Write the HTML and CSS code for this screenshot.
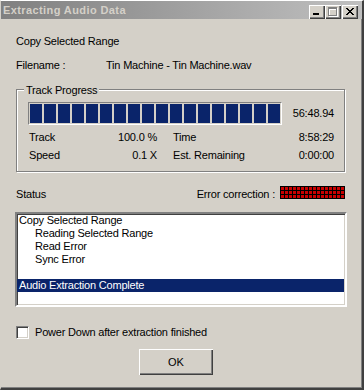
FILE: index.html
```html
<!DOCTYPE html>
<html lang="en">
<head>
    <meta charset="UTF-8">
    <meta name="viewport" content="width=device-width, initial-scale=1.0">
    <title>Extracting Audio Data</title>
    <link rel="stylesheet" href="styles.css">
</head>
<body>
    <div class="window">
        <div class="titlebar">
            <span class="titlebar-text">Extracting Audio Data</span>
            <div class="caption-buttons">
                <span class="cap-btn">
                    <svg width="16" height="14" viewBox="0 0 16 14" shape-rendering="crispEdges">
                        <rect x="4" y="8" width="6" height="2" fill="#000"/>
                    </svg>
                </span>
                <span class="cap-btn">
                    <svg width="16" height="14" viewBox="0 0 16 14" shape-rendering="crispEdges">
                        <g fill="#fff" transform="translate(1 1)">
                            <rect x="3" y="2" width="9" height="2"/>
                            <rect x="3" y="4" width="1" height="6"/>
                            <rect x="11" y="4" width="1" height="6"/>
                            <rect x="3" y="10" width="9" height="1"/>
                        </g>
                        <g fill="#808080">
                            <rect x="3" y="2" width="9" height="2"/>
                            <rect x="3" y="4" width="1" height="6"/>
                            <rect x="11" y="4" width="1" height="6"/>
                            <rect x="3" y="10" width="9" height="1"/>
                        </g>
                    </svg>
                </span>
                <span class="cap-btn cap-btn--close">
                    <svg width="16" height="14" viewBox="0 0 16 14" shape-rendering="crispEdges">
                        <g fill="#000">
                            <rect x="4" y="3" width="2" height="1"/><rect x="10" y="3" width="2" height="1"/>
                            <rect x="5" y="4" width="2" height="1"/><rect x="9" y="4" width="2" height="1"/>
                            <rect x="6" y="5" width="4" height="1"/>
                            <rect x="7" y="6" width="2" height="1"/>
                            <rect x="6" y="7" width="4" height="1"/>
                            <rect x="5" y="8" width="2" height="1"/><rect x="9" y="8" width="2" height="1"/>
                            <rect x="4" y="9" width="2" height="1"/><rect x="10" y="9" width="2" height="1"/>
                        </g>
                    </svg>
                </span>
            </div>
        </div>

        <div class="content">
            <p class="task">Copy Selected Range</p>

            <div class="file-row">
                <span class="file-label">Filename :</span>
                <span>Tin Machine - Tin Machine.wav</span>
            </div>

            <div class="group">
                <span class="group-title">Track Progress</span>
                <div class="progress-row">
                    <div class="progress"></div>
                    <span>56:48.94</span>
                </div>
                <div class="stats">
                    <div class="stat"><span>Track</span><span>100.0 %</span></div>
                    <div class="stat"><span>Time</span><span>8:58:29</span></div>
                    <div class="stat"><span>Speed</span><span>0.1 X</span></div>
                    <div class="stat"><span>Est. Remaining</span><span>0:00:00</span></div>
                </div>
            </div>

            <div class="status-row">
                <span>Status</span>
                <div class="ecc">
                    <span>Error correction :</span>
                    <span class="ecc-grid"></span>
                </div>
            </div>

            <div class="listbox">
                <div class="list-item">Copy Selected Range</div>
                <div class="list-item list-item--sub">Reading Selected Range</div>
                <div class="list-item list-item--sub">Read Error</div>
                <div class="list-item list-item--sub">Sync Error</div>
                <div class="list-item"></div>
                <div class="list-item list-item--selected">Audio Extraction Complete</div>
            </div>

            <label class="check">
                <span class="checkbox"></span>
                <span>Power Down after extraction finished</span>
            </label>

            <div class="actions">
                <button class="button">OK</button>
            </div>
        </div>
    </div>
</body>
</html>
```

FILE: styles.css
```css
/* Win2000 style dialog */
:root {
    --clr-face: #d4d0c8;
    --clr-shadow: #808080;
    --clr-dark: #404040;
    --clr-light: #ffffff;
    --clr-select: #0a246a;
    --font-family: 'Liberation Sans', Arial, sans-serif;
}

* {
    margin: 0;
    padding: 0;
    box-sizing: border-box;
}

body {
    font-family: var(--font-family);
    font-size: 11px;
    line-height: 13px;
    letter-spacing: -0.2px;
    color: #000;
    background: var(--clr-face);
}

.window {
    width: 364px;
    height: 390px;
    background: var(--clr-face);
    border-top: 1px solid var(--clr-light);
    border-left: 1px solid var(--clr-face);
    border-right: 2px solid var(--clr-dark);
    border-bottom: 2px solid var(--clr-dark);
    box-shadow: inset -1px -1px var(--clr-shadow);
    display: flex;
    flex-direction: column;
}

.titlebar {
    height: 18px;
    display: flex;
    align-items: center;
    justify-content: space-between;
    padding: 0 4px 0 2px;
    background: linear-gradient(to right, #808080, #c0c0c0);
}

.titlebar-text {
    font-weight: 700;
    letter-spacing: 0.4px;
    color: var(--clr-face);
}

.caption-buttons {
    display: flex;
    align-self: flex-start;
    margin-top: 4px;
}

.cap-btn {
    display: block;
    width: 16px;
    height: 14px;
    background: var(--clr-face);
    box-shadow: inset 1px 1px var(--clr-light), inset -1px -1px var(--clr-dark),
        inset -2px -2px var(--clr-shadow);
}

.cap-btn svg {
    display: block;
}

.cap-btn--close {
    margin-left: 1px;
}

.content {
    flex: 1;
    padding: 0 17px 0 15px;
}

.task {
    margin-top: 16px;
}

.file-row {
    display: flex;
    margin-top: 11px;
}

.file-label {
    width: 90px;
}

/* Group box with etched border */
.group {
    margin-top: 17px;
    border: 1px solid var(--clr-shadow);
    box-shadow: inset 1px 1px var(--clr-light), 1px 1px var(--clr-light);
    padding: 0 10px 9px 11px;
}

.group-title {
    display: table;
    margin: -6px 0 0 -4px;
    padding: 0 2px;
    background: var(--clr-face);
}

.progress-row {
    display: flex;
    align-items: center;
    justify-content: space-between;
    margin-top: 5px;
}

.progress {
    width: 254px;
    height: 23px;
    padding: 1px;
    border: 1px solid;
    border-color: var(--clr-shadow) var(--clr-light) var(--clr-light) var(--clr-shadow);
    background: repeating-linear-gradient(to right, var(--clr-select) 0 12px, transparent 12px 14px) content-box;
}

.stats {
    display: grid;
    grid-template-columns: 129px 162px;
    column-gap: 15px;
    row-gap: 5px;
    margin-top: 6px;
}

.stat {
    display: flex;
    justify-content: space-between;
    padding-left: 1px;
}

.status-row {
    display: flex;
    justify-content: space-between;
    align-items: flex-start;
    margin-top: 16px;
}

.ecc {
    display: flex;
    align-items: flex-start;
    gap: 5px;
}

.ecc-grid {
    display: block;
    width: 65px;
    height: 13px;
    margin-top: -2px;
    border-right: 1px solid #000;
    background-color: #c80000;
    background-image:
        repeating-linear-gradient(to right, #000 0 1px, transparent 1px 4px),
        repeating-linear-gradient(to bottom, #000 0 1px, transparent 1px 4px);
}

/* Sunken list box */
.listbox {
    margin: 11px -2px 0 -1px;
    height: 95px;
    background: #fff;
    border: 2px solid;
    border-color: var(--clr-shadow) var(--clr-light) var(--clr-light) var(--clr-shadow);
    box-shadow: inset 1px 1px var(--clr-dark), inset -1px -1px var(--clr-face);
}

.list-item {
    height: 13px;
    padding-left: 2px;
    white-space: nowrap;
}

.list-item--sub {
    padding-left: 18px;
}

.list-item--selected {
    background: var(--clr-select);
    color: #fff;
    margin-right: 1px;
}

.check {
    display: flex;
    align-items: flex-start;
    gap: 6px;
    margin-top: 19px;
}

.checkbox {
    display: block;
    width: 13px;
    height: 13px;
    background: #fff;
    border: 1px solid;
    border-color: var(--clr-shadow) var(--clr-light) var(--clr-light) var(--clr-shadow);
    box-shadow: inset 1px 1px var(--clr-dark), inset -1px -1px var(--clr-face);
}

.actions {
    display: flex;
    margin-top: 10px;
    padding-left: 123px;
}

.button {
    width: 74px;
    height: 26px;
    font-family: inherit;
    font-size: 11px;
    color: #000;
    background: var(--clr-face);
    border: none;
    box-shadow: inset 1px 1px var(--clr-light), inset -1px -1px var(--clr-dark),
        inset -2px -2px var(--clr-shadow);
}
```
